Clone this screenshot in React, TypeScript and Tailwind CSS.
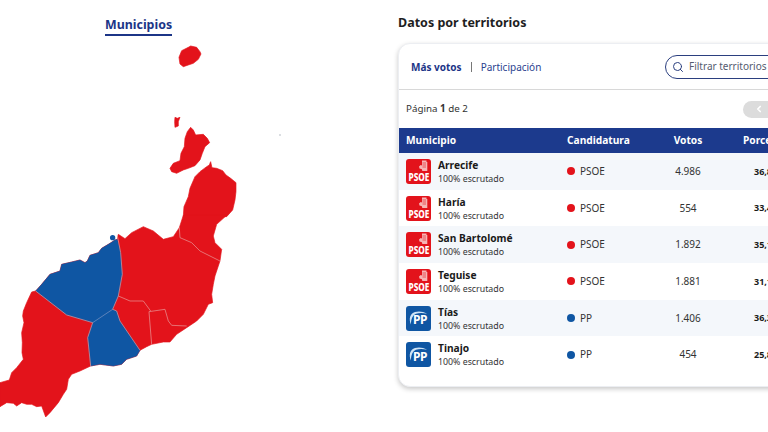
import { Search, ChevronLeft } from "lucide-react"

type Row = {
    name: string,
    party: "PSOE" | "PP",
    votes: string,
    percent: string,
}

const rows: Row[] = [
    { name: "Arrecife", party: "PSOE", votes: "4.986", percent: "36,85%" },
    { name: "Haría", party: "PSOE", votes: "554", percent: "33,40%" },
    { name: "San Bartolomé", party: "PSOE", votes: "1.892", percent: "35,12%" },
    { name: "Teguise", party: "PSOE", votes: "1.881", percent: "31,10%" },
    { name: "Tías", party: "PP", votes: "1.406", percent: "36,30%" },
    { name: "Tinajo", party: "PP", votes: "454", percent: "25,80%" },
]

const LogoPsoe = () => {
    return (
        <div className="relative w-[25px] h-[25px] rounded-[3px] bg-[#e3131b] flex flex-col items-center justify-end overflow-hidden shrink-0">
            <svg viewBox="0 0 25 25" className="absolute left-0 top-0 w-[25px] h-[25px]">
                <path d="M16 1.500h4.500v1.500h.8v9h-5l-.4-1.800-2.400-.6-.5-2.200 1.700-1.300 1.300.3z" fill="#f6b5b5" />
                <path d="M16.500 4h3.500M16.500 6h3.500M16.500 8h3.500" stroke="#e3131b" strokeWidth="0.6" />
            </svg>
            <span className="relative text-white font-extrabold text-[11px] leading-[11px] mb-[2px] scale-x-75">PSOE</span>
        </div>
    )
}

const LogoPp = () => {
    return (
        <div className="relative w-[25px] h-[25px] rounded-[3px] bg-[#0f56a3] flex items-center justify-center overflow-hidden shrink-0">
            <svg viewBox="0 0 25 25" className="absolute left-0 top-0 w-[25px] h-[25px]">
                <path d="M5 18.500C2.500 13 4 7.500 9 6c4-1.100 8-.6 12 1.800-4-1-8-1-11 0-3.500 1.400-5 5.700-5 10.700z" fill="#cfe3f5" />
            </svg>
            <span className="relative text-white font-bold text-[12px] leading-none tracking-[-0.5px] mt-[4px] ml-[3px]">PP</span>
        </div>
    )
}

const LanzaroteMap = () => {
    return (
        <svg viewBox="0 36 300 396" className="w-[300px] h-[396px] block">
            {/* islotes, coordenadas a escala 3x */}
            <g transform="scale(0.3333)" fill="#e3131b" stroke="#e3131b" strokeWidth="2" strokeLinejoin="round">
                <path d="M537 172L545 152L565 142L572 138L590 142L600 155L603 162L595 178L580 190L565 195L550 200L540 192Z" />
                <path d="M525 352L532 355L540 352L535 365L535 378L525 382L524 365Z" />
                <path d="M572 382L580 390L587 405L610 403L622 415L629 428L615 440L607 460L600 480L585 497L565 505L550 510L530 520L515 515L510 505L520 490L540 482L543 460L553 440L555 415L562 395Z" />
                <path d="M550 648L552 620L565 590L570 565L585 530L600 515L620 500L628 495L632 485L636 503L650 505L668 512L678 525L692 535L708 548L708 575L705 600L698 630L680 650L550 650Z" />
            </g>
            <g transform="translate(0 216) scale(0.3333)" strokeLinejoin="round">
                <path
                    d="M550 -2L680 -2L650 25L640 60L645 80L665 100L660 135L645 180L640 205L635 235L638 260L625 265L610 295L590 315L560 335L530 355L510 378L490 378L455 385L440 392L420 403L410 420L380 430L365 445L340 450L300 445L272 450L240 465L215 475L205 490L200 520L190 535L175 560L150 590L137 603L125 570L110 572L95 565L80 565L65 560L50 570L40 562L20 560L0 572L0 500L28 492L35 470L50 455L70 430L66 410L67 380L65 350L72 320L68 300L70 285L80 260L95 228L107 225L125 205L150 175L180 165L185 145L215 138L240 132L255 140L262 135L270 118L295 110L305 97L330 82L345 72L352 70L355 55L375 68L395 50L430 32L460 45L490 70L520 62L538 35Z"
                    fill="#e3131b"
                    stroke="#e3131b"
                    strokeWidth="2"
                />
                <path
                    d="M107 225L125 205L150 175L180 165L185 145L215 138L240 132L255 140L262 135L270 118L295 110L305 97L330 82L345 72L352 70L362 110L367 175L355 240L338 280L278 320L200 297Z"
                    fill="#0f56a3"
                    stroke="#0f56a3"
                    strokeWidth="1"
                />
                <path
                    d="M278 320L338 280L350 285L360 315L420 403L410 420L380 430L365 445L340 450L300 445L272 450L263 365Z"
                    fill="#0f56a3"
                    stroke="#0f56a3"
                    strokeWidth="1"
                />
                <circle cx="338" cy="65" r="8" fill="#0f56a3" />
                <g fill="none" stroke="#e8a0a0" strokeWidth="2">
                    <path d="M538 35L540 65L575 80L600 105L660 135" />
                    <path d="M352 58L362 110L367 175L355 240L338 280" />
                    <path d="M338 280L278 320" stroke="#6f9fd0" />
                    <path d="M107 225L200 297L278 320" />
                    <path d="M278 320L263 365L272 450" />
                    <path d="M338 280L350 285L360 315L420 403" />
                    <path d="M355 240L390 255L430 255L452 285" />
                    <path d="M447 287L455 385" />
                    <path d="M447 287L495 280L505 315L515 328L560 330" />
                </g>
            </g>
            <circle cx="280" cy="135" r="0.700" fill="#9ca3af" />
        </svg>
    )
}

const TableRow = ({ row, index }: { row: Row, index: number }) => {
    return (
        <div className={`grid grid-cols-[161px_93px_56px_1fr] items-center h-[36.7px] pl-[7px] ${index % 2 === 0 ? "bg-[#f4f7fb]" : "bg-white"}`}>
            <div className="flex items-center gap-[7px]">
                {row.party === "PSOE" ? <LogoPsoe /> : <LogoPp />}
                <div className="flex flex-col mt-[1px]">
                    <span className="text-[10.200px] leading-[14px] font-bold text-[#1a1a1a]">{row.name}</span>
                    <span className="text-[8.800px] leading-[14px] text-[#333]">100% escrutado</span>
                </div>
            </div>
            <div className="flex items-center gap-[5px] text-[10px] text-[#333]">
                <span className={`w-[8px] h-[8px] rounded-full ${row.party === "PSOE" ? "bg-[#e3131b]" : "bg-[#0f56a3]"}`}></span>
                {row.party}
            </div>
            <div className="text-center text-[10px] text-[#333]">{row.votes}</div>
            <div className="pl-[38px] text-[9px] font-bold text-[#1a1a1a]">{row.percent}</div>
        </div>
    )
}

export default function App() {
    return (
        <div className="w-[768px] h-[432px] overflow-hidden flex bg-white font-['Noto_Sans',sans-serif]">
            <div className="w-[398px] shrink-0 flex flex-col pt-[17px]">
                <div className="ml-[105px] w-fit text-[12.400px] leading-[16px] font-bold text-[#1c3587] border-b-2 border-[#1c3587] pb-[1px]">
                    Municipios
                </div>
                <LanzaroteMap />
            </div>
            <div className="w-[430px] shrink-0 flex flex-col pt-[14px]">
                <div className="text-[12.500px] leading-[18px] font-bold text-[#1f1f1f] mb-[11px]">Datos por territorios</div>
                <div className="rounded-[12px] bg-white overflow-hidden border border-[#eceef2] shadow-[0_2px_5px_rgba(0,0,0,0.22)] h-[344px]">
                    <div className="h-[46px] border-b border-[#d8d8d8] flex items-center pl-3">
                        <div className="w-[254px] flex items-center mt-[1px]">
                            <span className="text-[10px] font-bold text-[#1c3587] whitespace-nowrap">Más votos</span>
                            <span className="w-px h-[10px] bg-[#777] ml-[9px] mr-[9px]"></span>
                            <span className="text-[10px] text-[#2b3f8f] whitespace-nowrap">Participación</span>
                        </div>
                        <div className="w-[150px] h-[24px] rounded-full border border-[#2b3f7f] flex items-center gap-[5px] pl-[6px]">
                            <Search size={12} color="#2b3f7f" />
                            <span className="text-[10px] text-[#555c70] whitespace-nowrap">Filtrar territorios</span>
                        </div>
                    </div>
                    <div className="h-[38px] flex items-center pl-[7px]">
                        <span className="w-[337px] text-[9.800px] text-[#333]">Página <b>1</b> de 2</span>
                        <div className="w-[50px] h-[17px] rounded-full bg-[#dcdcdc] flex items-center pl-[11px]">
                            <ChevronLeft size={10} color="#fff" strokeWidth={4} />
                        </div>
                    </div>
                    <div className="grid grid-cols-[161px_93px_56px_1fr] items-center h-[25px] pl-[7px] bg-[#1c3a8d] text-white text-[10.200px] font-bold">
                        <div>Municipio</div>
                        <div>Candidatura</div>
                        <div className="text-center">Votos</div>
                        <div className="pl-[27px]">Porcentaje</div>
                    </div>
                    {rows.map((row, i) => <TableRow key={row.name} row={row} index={i} />)}
                </div>
            </div>
        </div>
    )
}
